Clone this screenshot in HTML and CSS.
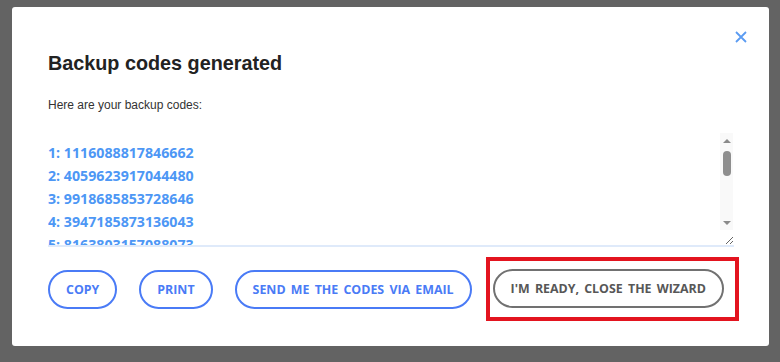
FILE: index.html
```html
<!DOCTYPE html>
<html lang="en">
<head>
    <meta charset="UTF-8">
    <meta name="viewport" content="width=device-width, initial-scale=1.0">
    <title>Backup codes</title>
    <link rel="stylesheet" href="styles.css">
</head>
<body>
    <div class="modal">
        <button class="close" aria-label="Close">
            <svg width="12" height="12" viewBox="0 0 12 12">
                <path d="M1 1L11 11M11 1L1 11" stroke="#5b9cf2" stroke-width="1.8" fill="none"/>
            </svg>
        </button>
        <h1 class="title">Backup codes generated</h1>
        <p class="intro">Here are your backup codes:</p>
        <div class="codes-box">
            <textarea class="codes" readonly>1: 1116088817846662
2: 4059623917044480
3: 9918685853728646
4: 3947185873136043
5: 8163803157088073
6: 2270415968231157
7: 6603918425570291
8: 5128840663917420
9: 7340092851164538
10: 3395716204482917</textarea>
            <div class="scrollbar">
                <span class="arrow-up"></span>
                <span class="thumb"></span>
                <span class="arrow-down"></span>
            </div>
        </div>
        <div class="actions">
            <button class="btn">COPY</button>
            <button class="btn">PRINT</button>
            <button class="btn">SEND ME THE CODES VIA EMAIL</button>
            <div class="highlight">
                <button class="btn btn-done">I'M READY, CLOSE THE WIZARD</button>
            </div>
        </div>
    </div>
</body>
</html>
```

FILE: styles.css
```css
*{
    margin: 0;
    padding: 0;
    box-sizing: border-box;
}
body{
    background-color: #636363;
    padding: 7px 11px 16px 12px;
    font-family: "Liberation Sans", Arial, sans-serif;
}
.modal{
    position: relative;
    background-color: #fff;
    border-radius: 3px;
    padding: 44px 35px 25px 36px;
    height: 339px;
}
.close{
    position: absolute;
    top: 24px;
    right: 22px;
    background: none;
    border: none;
    cursor: pointer;
    width: 12px;
    height: 12px;
    display: flex;
}
.title{
    font-size: 19.8px;
    line-height: 24px;
    font-weight: bold;
    color: #222;
}
.intro{
    margin-top: 22px;
    font-size: 12px;
    line-height: 16px;
    color: #333;
}
.codes-box{
    position: relative;
    margin-top: 20px;
}
.codes{
    display: block;
    width: 100%;
    height: 114px;
    border: none;
    border-bottom: 2px solid #dfeafa;
    padding: 8px 0 0 0;
    font-family: "Open Sans", sans-serif;
    font-weight: bold;
    font-size: 14.2px;
    line-height: 23px;
    color: #4d97f5;
    resize: vertical;
    outline: none;
    overflow-y: scroll;
}
.scrollbar{
    position: absolute;
    top: 0;
    right: 1px;
    width: 13px;
    height: 97px;
    background-color: #f9f9f9;
    display: flex;
    flex-direction: column;
    align-items: center;
}
.arrow-up{
    margin-top: 6px;
    border-left: 4px solid transparent;
    border-right: 4px solid transparent;
    border-bottom: 4px solid #8a8a8a;
}
.thumb{
    margin-top: 8px;
    width: 8px;
    height: 25px;
    border-radius: 4px;
    background-color: #8e8e8e;
}
.arrow-down{
    margin-top: auto;
    margin-bottom: 5px;
    border-left: 4px solid transparent;
    border-right: 4px solid transparent;
    border-top: 4px solid #8a8a8a;
}
.actions{
    display: flex;
    align-items: center;
    margin-top: 10px;
}
.btn{
    flex-shrink: 0;
    white-space: nowrap;
    font-family: "Open Sans", sans-serif;
    font-weight: bold;
    font-size: 12.4px;
    word-spacing: 2px;
    color: #4a7bf6;
    background: #fff;
    border: 2px solid #4a7bf6;
    border-radius: 20px;
    height: 39px;
    padding: 0 16px;
    margin-right: 22px;
    cursor: pointer;
}
.highlight{
    flex-shrink: 0;
    border: 4px solid #e3141f;
    padding: 8px 11px 9px 3px;
    margin-left: -8px;
}
.btn-done{
    color: #575757;
    border-color: #717171;
    margin-right: 0;
}
```
